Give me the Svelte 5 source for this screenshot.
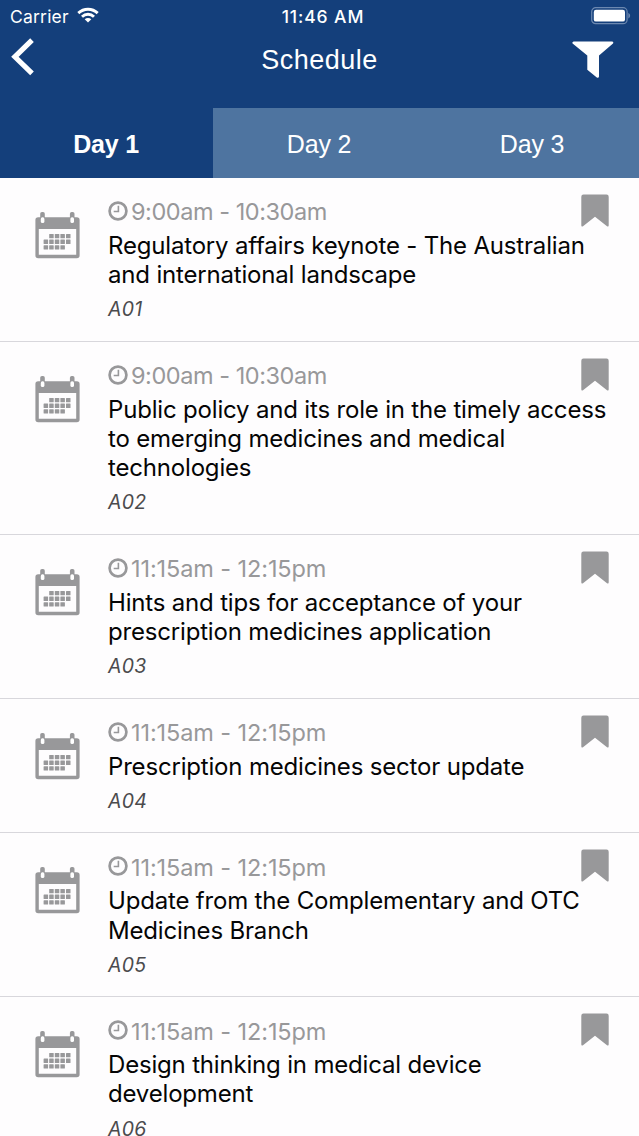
<script>
  const days = ['Day 1', 'Day 2', 'Day 3'];
  let active = $state(0);

  const sessions = [
    { time: '9:00am - 10:30am', lines: ['Regulatory affairs keynote - The Australian', 'and international landscape'], code: 'A01' },
    { time: '9:00am - 10:30am', lines: ['Public policy and its role in the timely access', 'to emerging medicines and medical', 'technologies'], code: 'A02' },
    { time: '11:15am - 12:15pm', lines: ['Hints and tips for acceptance of your', 'prescription medicines application'], code: 'A03' },
    { time: '11:15am - 12:15pm', lines: ['Prescription medicines sector update'], code: 'A04' },
    { time: '11:15am - 12:15pm', lines: ['Update from the Complementary and OTC', 'Medicines Branch'], code: 'A05' },
    { time: '11:15am - 12:15pm', lines: ['Design thinking in medical device', 'development'], code: 'A06' }
  ];

  // Day squares of the calendar glyph: [first column, last column] for each week
  const weeks = [[1, 4], [0, 4], [0, 3]];
  const squares = weeks.flatMap(([from, to], row) =>
    Array.from({ length: to - from + 1 }, (_, i) => ({ x: 9.6 + (from + i) * 5.6, y: 22 + row * 5.6 }))
  );
</script>

<div class="screen">
  <header>
    <div class="status">
      <div class="carrier">
        <span>Carrier</span>
        <svg width="22" height="16" viewBox="0 0 22 16" fill="none" stroke="#fff" stroke-width="2.9">
          <path d="M1.3 6.1C6.8.9 15.2.9 20.7 6.1" />
          <path d="M5 9.7C8.4 6.5 13.6 6.5 17 9.7" />
          <path d="M11 15.4 7.7 12.2C9.5 10.6 12.5 10.6 14.3 12.2Z" fill="#fff" stroke="none" />
        </svg>
      </div>
      <span class="clock">11:46 AM</span>
      <svg class="battery" width="40" height="18" viewBox="0 0 40 18">
        <rect x=".7" y=".7" width="35.4" height="16" rx="4" fill="none" stroke="#6c88b0" stroke-width="1.2" />
        <rect x="2.8" y="2.8" width="31.2" height="11.8" rx="2.2" fill="#fff" />
        <path d="M37.3 6c2.4.7 2.4 4.7 0 5.4Z" fill="#6c88b0" />
      </svg>
    </div>
    <div class="nav">
      <svg width="26" height="38" viewBox="0 0 26 38" fill="none" stroke="#fff" stroke-width="5.2">
        <path d="M23 2.2 5.9 18.8 23 35.4" />
      </svg>
      <h1>Schedule</h1>
      <svg class="filter" width="42" height="38" viewBox="0 0 42 38" fill="#fff">
        <path d="M1.7.6H39.8Q42 .6 41 2.5L27 14.6V35.5Q26.8 37.3 24.8 36.6L15.3 28.8V14.6L.6 2.6Q-.2 1 1.7.6Z" />
      </svg>
    </div>
    <div class="tabs">
      {#each days as day, i}
        <button class:active={active === i} onclick={() => (active = i)}>{day}</button>
      {/each}
    </div>
  </header>

  <main>
    {#each sessions as session}
      <article>
        <svg class="calendar" width="46" height="48" viewBox="0 0 46 48">
          <path fill="#98989a" fill-rule="evenodd" d="M4.2 5.3H42.8Q45.6 5.3 45.6 8.1V43.5Q45.6 46.3 42.8 46.3H4.2Q1.4 46.3 1.4 43.5V8.1Q1.4 5.3 4.2 5.3ZM4.8 17V42.8H42.2V17Z" />
          <g fill="#98989a">
            <rect x="6.2" y="0" width="4.6" height="7" rx="1.8" />
            <rect x="35.9" y="0" width="4.6" height="7" rx="1.8" />
            {#each squares as s}
              <rect x={s.x} y={s.y} width="4.5" height="4.3" rx=".5" />
            {/each}
          </g>
          <g fill="#fff">
            <rect x="6.8" y="5.3" width="3.6" height="5.8" rx="1.6" />
            <rect x="36.4" y="5.3" width="3.6" height="5.8" rx="1.6" />
          </g>
        </svg>
        <div class="details">
          <div class="time" class:tight={session.time.startsWith('9')}>
            <svg width="20" height="20" viewBox="0 0 20 20" fill="none" stroke="#98989a">
              <circle cx="10" cy="10" r="8.4" stroke-width="2.7" />
              <path d="M10.4 4.7V10.5H5.7" stroke-width="1.6" />
            </svg>
            <span>{session.time}</span>
          </div>
          <h2>
            {#each session.lines as line}<span>{line}</span>{/each}
          </h2>
          <p>{session.code}</p>
        </div>
        <svg class="bookmark" width="28" height="33" viewBox="0 0 28 33" fill="#98989a">
          <path d="M2.5.5H25.5Q27.7.5 27.7 2.7V31.3Q27.7 33.3 26 32.2L14 22.8 2 32.2Q.3 33.3.3 31.3V2.7Q.3.5 2.5.5Z" />
        </svg>
      </article>
    {/each}
  </main>
</div>

<style>
  :global(body) { margin: 0; }
  .screen {
    width: 639px;
    height: 1136px;
    overflow: hidden;
    background: #fefdfe;
    color: #050505;
    font-family: Inter, sans-serif;
  }
  header { background: #143f7b; color: #fff; }
  .status {
    display: grid;
    grid-template-columns: 1fr auto 1fr;
    height: 32px;
    align-items: center;
    padding: 0 8px 0 10px;
    box-sizing: border-box;
  }
  .carrier { display: flex; align-items: center; gap: 8px; font-size: 17.5px; letter-spacing: .2px; }
  .carrier svg { margin-top: -2px; }
  .clock { font-size: 17.5px; font-weight: 550; letter-spacing: .9px; padding-left: 5px; }
  .battery { justify-self: end; margin-top: -1px; }
  .nav {
    display: grid;
    grid-template-columns: 1fr auto 1fr;
    height: 76px;
    padding: 6px 25px 0 9px;
    box-sizing: border-box;
    align-items: start;
  }
  h1 {
    margin: 3px 0 0 16px;
    font: 400 27px/38px "Liberation Sans", Arial, sans-serif;
    letter-spacing: .5px;
  }
  .filter { justify-self: end; margin-top: 3px; }
  .tabs { display: grid; grid-template-columns: repeat(3, 1fr); height: 69.7px; }
  button {
    border: 0;
    padding: 3px 1px 0 0;
    background: #4e74a0;
    color: #fff;
    font: 400 25px "Liberation Sans", Arial, sans-serif;
    letter-spacing: -.2px;
  }
  button.active { background: #143f7b; font-weight: 700; }
  article {
    display: grid;
    grid-template-columns: 46px minmax(0, 1fr) 28px;
    column-gap: 28px;
    padding: 20px 30px 19.3px 34px;
    border-bottom: 1px solid #d8d7dc;
  }
  .calendar { margin-top: 14px; }
  .bookmark { margin-top: -4px; }
  .time {
    display: flex;
    align-items: center;
    gap: 3px;
    height: 28px;
    color: #98989a;
    font-size: 23.5px;
    letter-spacing: -.1px;
  }
  .time.tight { letter-spacing: -.45px; }
  .time svg { margin-top: -2px; }
  h2 { margin: 5px 0 0; font-size: 24px; font-weight: 400; line-height: 29.3px; letter-spacing: -.18px; }
  h2 span { display: block; white-space: nowrap; }
  p { margin: 8px 0 0; color: #4b4b4d; font-size: 19.5px; font-style: italic; line-height: 24px; letter-spacing: .3px; }
</style>
